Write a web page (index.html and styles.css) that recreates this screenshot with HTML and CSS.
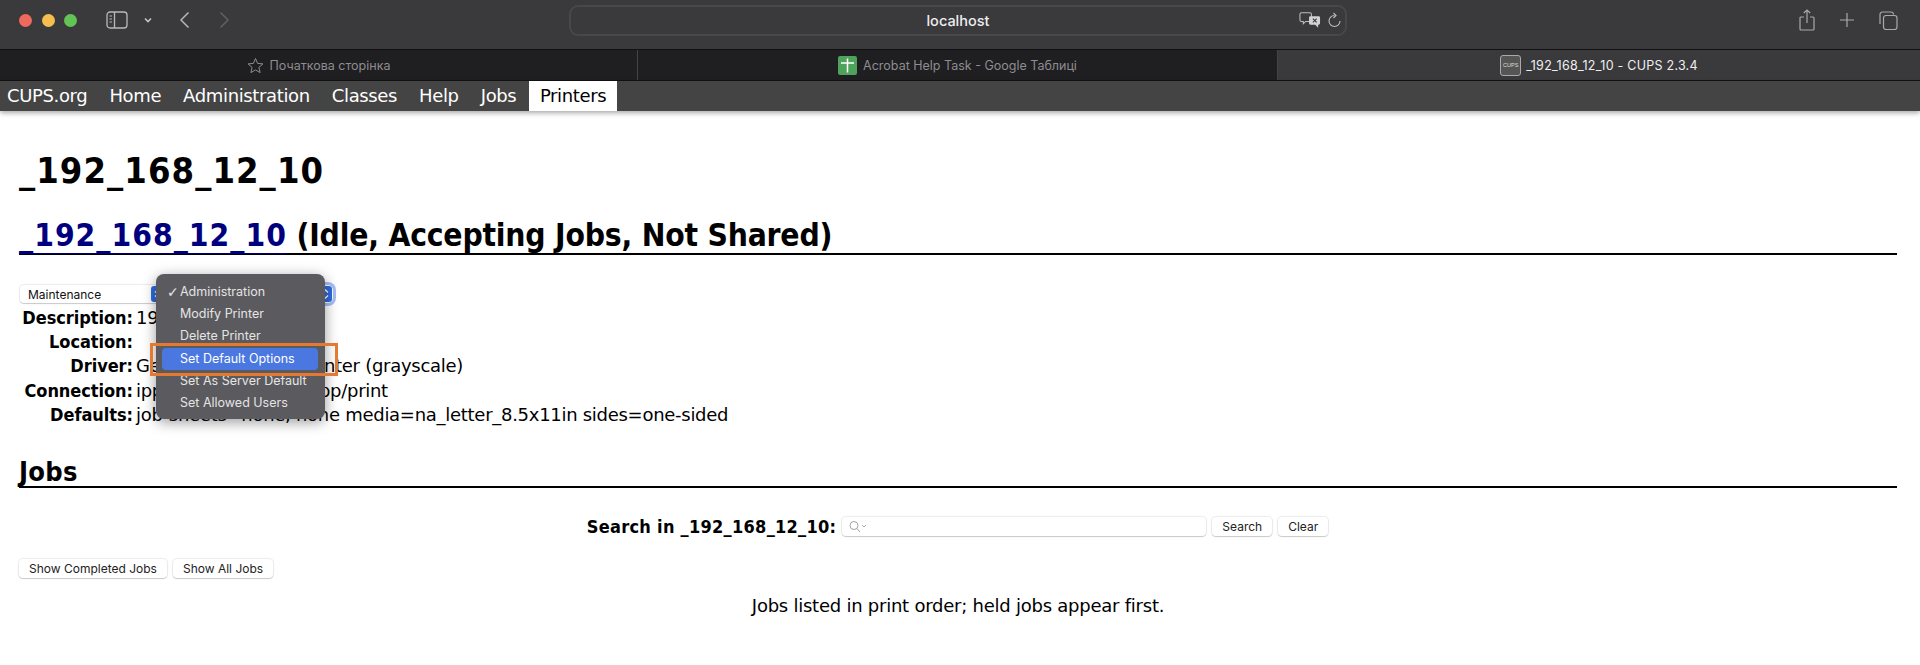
FILE: index.html
```html
<!DOCTYPE html>
<html lang="uk">
<head>
<meta charset="utf-8">
<title>_192_168_12_10 - CUPS 2.3.4</title>
<link rel="stylesheet" href="styles.css">
</head>
<body>
<header class="toolbar">
  <div class="lights"><i class="light red"></i><i class="light yellow"></i><i class="light green"></i></div>
  <svg class="ic sidebar" width="22" height="18" viewBox="0 0 22 18" fill="none" stroke="#b9b8ba" stroke-width="1.3"><rect x="1" y="1" width="20" height="16" rx="3"/><path d="M8.500 1v16"/><path d="M3.500 5h2.500M3.500 8h2.500M3.500 11h2.500" stroke-width="1"/></svg>
  <svg class="ic caret" width="10" height="7" viewBox="0 0 10 7" fill="none" stroke="#c4c3c5" stroke-width="1.6"><path d="M2 1.500 5 4.500l3-3"/></svg>
  <svg class="ic back" width="11" height="18" viewBox="0 0 11 18" fill="none" stroke="#b5b4b6" stroke-width="1.5"><path d="M9.500 1.500 2 9l7.500 7.500"/></svg>
  <svg class="ic forward" width="11" height="18" viewBox="0 0 11 18" fill="none" stroke="#605f62" stroke-width="1.5"><path d="M1.500 1.500 9 9l-7.500 7.500"/></svg>
  <div class="address">
    <span class="host">localhost</span>
    <div class="addr-icons">
      <svg width="22" height="18" viewBox="0 0 23 18" fill="none"><path d="M2.500 1.500h9a1.500 1.500 0 0 1 1.500 1.500v6a1.500 1.500 0 0 1-1.500 1.500H7l-2.500 2.500v-2.500h-2a1.500 1.500 0 0 1-1.500-1.500V3a1.500 1.500 0 0 1 1.500-1.500z" stroke="#bdbcbe" stroke-width="1.100"/><path d="M12 5h8.500a1.500 1.500 0 0 1 1.500 1.500v6a1.500 1.500 0 0 1-1.500 1.500H20v3l-3-3h-5a1.500 1.500 0 0 1-1.500-1.500v-6A1.500 1.500 0 0 1 12 5z" fill="#d2d1d3"/><path d="M14.500 7.500l4 4M18.500 7.500l-4 4" stroke="#3a393c" stroke-width="1.100"/></svg>
      <svg width="14" height="17" viewBox="0 0 14 17" fill="none" stroke="#bdbcbe" stroke-width="1.100"><path d="M6.500 3.500a5.500 5.500 0 1 0 5.500 5.500"/><path d="M5.500 1l2.500 2.500-2.500 2.500"/></svg>
    </div>
  </div>
  <div class="actions">
    <svg width="16" height="22" viewBox="0 0 16 22" fill="none" stroke="#a9a8aa" stroke-width="1.200"><path d="M5 8H2a1 1 0 0 0-1 1v11a1 1 0 0 0 1 1h12a1 1 0 0 0 1-1V9a1 1 0 0 0-1-1h-3"/><path d="M8 14V1M4.800 4 8 1l3.200 3"/></svg>
    <svg width="16" height="16" viewBox="0 0 16 16" fill="none" stroke="#a9a8aa" stroke-width="1.200"><path d="M8 1v14M1 8h14"/></svg>
    <svg width="19" height="19" viewBox="0 0 19 19" fill="none" stroke="#a9a8aa" stroke-width="1.200"><rect x="4.500" y="4.500" width="13.500" height="14" rx="2.500"/><path d="M1 13V3.500A2.500 2.500 0 0 1 3.500 1H12a2.500 2.500 0 0 1 2.500 2.500"/></svg>
  </div>
</header>
<nav class="tabs">
  <div class="tab">
    <svg width="17" height="17" viewBox="0 0 17 17" fill="none" stroke="#8e8d8f" stroke-width="1"><path d="M8.500 1.500 10.600 6.400l5.300.5-4 3.500 1.200 5.200-4.600-2.700-4.600 2.700 1.200-5.200-4-3.500 5.300-.5z"/></svg>
    <span>Початкова сторінка</span>
  </div>
  <div class="tab">
    <svg width="19" height="19" viewBox="0 0 19 19"><rect width="19" height="19" rx="2" fill="#4fa25c"/><path d="M3 7h13M9.500 2.500v14" stroke="#fff" stroke-width="1.500"/></svg>
    <span>Acrobat Help Task - Google Таблиці</span>
  </div>
  <div class="tab active">
    <span class="cups-icon">CUPS</span>
    <span>_192_168_12_10 - CUPS 2.3.4</span>
  </div>
</nav>
<nav class="menu-bar">
  <a>CUPS.org</a><a>Home</a><a>Administration</a><a>Classes</a><a>Help</a><a>Jobs</a><a class="current">Printers</a>
</nav>
<main class="page">
  <h1>_192_168_12_10</h1>
  <h2><a class="link">_192_168_12_10</a> (Idle, Accepting Jobs, Not Shared)</h2>
  <div class="selects">
    <div class="select maint"><span>Maintenance</span><i class="arrow"><svg width="13" height="16" viewBox="0 0 13 16" fill="none" stroke="#fff" stroke-width="1.300"><path d="M4 6.500l2.500-2.500L9 6.500M4 9.500 6.500 12 9 9.500"/></svg></i></div>
    <div class="select admin"><i class="arrow"><svg width="13" height="16" viewBox="0 0 13 16" fill="none" stroke="#fff" stroke-width="1.300"><path d="M4 6.500l2.500-2.500L9 6.500M4 9.500 6.500 12 9 9.500"/></svg></i></div>
    <div class="popup">
      <div class="item"><span class="check">✓</span>Administration</div>
      <div class="item">Modify Printer</div>
      <div class="item">Delete Printer</div>
      <div class="item hi">Set Default Options</div>
      <div class="item">Set As Server Default</div>
      <div class="item">Set Allowed Users</div>
    </div>
    <div class="callout"></div>
  </div>
  <table class="info">
    <tr><th>Description:</th><td>192.168.12.10</td></tr>
    <tr><th>Location:</th><td></td></tr>
    <tr><th>Driver:</th><td>Generic PostScript Printer (grayscale)</td></tr>
    <tr><th>Connection:</th><td>ipp://192.168.12.10/ipp/print</td></tr>
    <tr><th>Defaults:</th><td>job-sheets=none, none media=na_letter_8.5x11in sides=one-sided</td></tr>
  </table>
  <h2 class="jobs">Jobs</h2>
  <div class="search">
    <b>Search in _192_168_12_10:</b>
    <div class="field">
      <svg width="20" height="13" viewBox="0 0 20 13" fill="none" stroke="#a2a2a2" stroke-width="1"><circle cx="6" cy="5.500" r="4"/><path d="M9 8.500l3 3.500"/><path d="M14 5l2 2 2-2" stroke-width=".9"/></svg>
    </div>
    <button class="btn">Search</button><button class="btn">Clear</button>
  </div>
  <div class="show">
    <button class="btn">Show Completed Jobs</button><button class="btn">Show All Jobs</button>
  </div>
  <p class="note">Jobs listed in print order; held jobs appear first.</p>
</main>
</body>
</html>
```
FILE: styles.css
```css
* { box-sizing: border-box; }
html, body { margin: 0; height: 665px; overflow: hidden; background: #fff; }
body { font-family: "DejaVu Sans", sans-serif; color: #000; }

.toolbar { height: 49px; padding-bottom: 9px; background: #3a393c; display: flex; align-items: center; }
.lights { display: flex; gap: 9.500px; margin-left: 19px; }
.light { width: 13px; height: 13px; border-radius: 50%; display: block; }
.red { background: #ee6a5e; }
.yellow { background: #f5bf4f; }
.green { background: #61c454; }
.ic { display: block; flex: none; }
.sidebar { margin-left: 29px; }
.caret { margin-left: 15px; }
.back { margin-left: 26px; }
.forward { margin-left: 29px; }
.address { margin-left: 339px; width: 778px; height: 31px; border: 2px solid #48474a; border-radius: 9px; display: grid; grid-template-columns: 1fr auto 1fr; align-items: center; }
.host { grid-column: 2; font: 500 14.500px "Inter", sans-serif; color: #eee; }
.addr-icons { grid-column: 3; justify-self: end; display: flex; gap: 7px; align-items: center; padding-right: 3px; }
.actions { margin-left: auto; display: flex; align-items: center; gap: 24px; padding-right: 22px; }

.tabs { height: 32px; display: grid; grid-template-columns: 638px 640px 1fr; background: #1f1e21; border-top: 1px solid #111; border-bottom: 1px solid #111; }
.tab { display: flex; align-items: center; justify-content: center; gap: 6px; font: 12.500px "Inter", sans-serif; color: #8e8d90; border-right: 1px solid #444; }
.tab.active { background: #3a393c; color: #efeff0; border-right: 0; letter-spacing: .25px; gap: 5px; }
.cups-icon { width: 21px; height: 21px; border: 1px solid #aaa; border-radius: 3px; background: #555; color: #ddd; font: 5.500px "Liberation Sans", sans-serif; letter-spacing: 0; display: flex; align-items: center; justify-content: center; }

.menu-bar { height: 30px; background: #444; display: flex; box-shadow: 0 2px 5px rgba(0,0,0,.35); position: relative; }
.menu-bar a { color: #fff; font-size: 18px; line-height: 30px; padding: 0 11px; letter-spacing: -.36px; }
.menu-bar a:first-child { padding-left: 7px; }
.menu-bar a.current { background: #fff; color: #000; margin-left: 1.500px; }

.page { padding: 0 23px 0 19px; }
h1, h2, .info th, .search b { font-family: "DejaVu Sans Condensed", "DejaVu Sans", sans-serif; font-weight: bold; }
h1 { margin: 0; padding-top: 38px; font-size: 36px; line-height: 44px; letter-spacing: 1.070px; }
h2 { margin: 0; font-size: 31.500px; line-height: 36px; letter-spacing: -.2px; border-bottom: 2px solid #000; }
h1 + h2 { margin-top: 24px; }
.link { color: #00007f; letter-spacing: 1px; text-decoration: underline 1px; text-decoration-skip-ink: none; text-underline-offset: 7px; }

.selects { position: relative; margin: 30px 0 0 1px; height: 18px; display: flex; gap: 6px; }
.select { height: 18px; background: #fff; border-radius: 4px; box-shadow: 0 0 1px 1px rgba(0,0,0,.08), 0 1px 1px rgba(0,0,0,.15); font: 12px "Inter", sans-serif; color: #111; display: flex; align-items: center; padding-left: 8px; position: relative; }
.maint { width: 145px; }
.admin { width: 162px; border-radius: 5px; box-shadow: 0 0 0 3px #a7bff6; }
.arrow { position: absolute; right: 1px; top: 1px; width: 13px; height: 16px; background: #2f6bdf; border-radius: 3px; display: block; }
.arrow svg { display: block; }
.popup { position: absolute; left: 136px; top: -11px; width: 169px; height: 145px; background: #5b5a5e; border-radius: 8px; box-shadow: 0 3px 14px rgba(0,0,0,.4); padding: 7px 7px 7px 6px; color: #e4e4e4; font: 12.500px "Inter", sans-serif; z-index: 2; }
.item { height: 22.200px; line-height: 22px; padding-left: 18px; border-radius: 4px; position: relative; }
.item.hi { background: #4a78e0; color: #fff; }
.check { position: absolute; left: 5px; font: 14px "DejaVu Sans", sans-serif; line-height: 22px; }
.callout { position: absolute; left: 130px; top: 58px; width: 188px; height: 33px; border: 3px solid #e47a32; z-index: 3; }

.info { border-collapse: collapse; font-size: 18px; margin-top: 2px; letter-spacing: -.28px; }
.info th { width: 114px; padding: 0; text-align: right; letter-spacing: -.05px; }
.info td { padding: 0 0 0 3px; }
.info tr { height: 24.400px; }

h2.jobs { margin-top: 31px; font-size: 27px; line-height: 28px; letter-spacing: .3px; }
.search { display: flex; justify-content: center; align-items: center; margin-top: 28px; padding-left: 5px; font-size: 18px; }
.search b { letter-spacing: .28px; }
.field { width: 364px; height: 19px; margin: 0 6px; border-radius: 4px; background: #fff; box-shadow: 0 0 1px 1px rgba(0,0,0,.08), 0 1px 1px rgba(0,0,0,.15); padding-left: 6px; display: flex; align-items: center; }
.btn { height: 19px; border: 0; padding: 0 10px; background: #fff; border-radius: 4px; box-shadow: 0 0 1px 1px rgba(0,0,0,.08), 0 1px 1px rgba(0,0,0,.15); font: 12px "Inter", sans-serif; color: #222; margin-right: 6px; }
.show { margin-top: 21px; }
.note { margin: 17.500px 0 0; text-align: center; font-size: 18px; letter-spacing: -.24px; }
```
